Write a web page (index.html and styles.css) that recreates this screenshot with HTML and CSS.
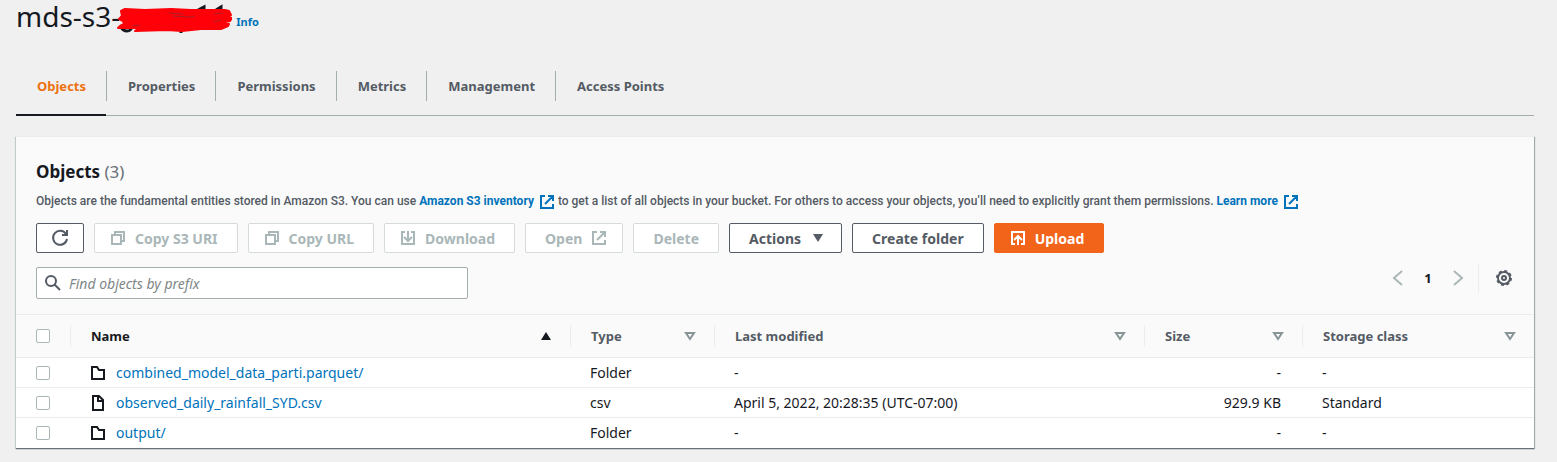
FILE: index.html
```
<!DOCTYPE html>
<html lang="en">
<head>
<meta charset="utf-8">
<title>mds-s3 - S3 bucket</title>
<link rel="stylesheet" href="styles.css">
</head>
<body>
<svg class="defs" aria-hidden="true">
  <symbol id="external" viewBox="0 0 16 16"><path d="M6 2H2v12h12v-4M9 2h5v5M6 10l8-8"/></symbol>
  <symbol id="copy" viewBox="0 0 16 16"><path d="M2 5h9v9H2zM5 5V2h9v9h-3"/></symbol>
  <symbol id="download" viewBox="0 0 16 16"><path d="M5 2H2v12h12V2h-3M8 1v9M4 7l4 4 4-4"/></symbol>
  <symbol id="upload" viewBox="0 0 16 16"><path d="M5 14H2V2h12v12h-3M8 15V7M4 10l4-4 4 4"/></symbol>
  <symbol id="folder" viewBox="0 0 16 16"><path d="M2 2h5l2 3h5v9H2z"/></symbol>
  <symbol id="file" viewBox="0 0 16 16"><path d="M3 1h6l4 4v10H3zM8 1v5h5"/></symbol>
  <symbol id="sort" viewBox="0 0 16 16"><path d="M4 5h8l-4 6z"/></symbol>
</svg>

<header class="page-header">
  <h1 class="bucket-name">mds-s3-<svg class="scribble" viewBox="0 0 116 36" role="img" aria-label="Redacted name">
    <path class="ink" d="M6 16v4M5 27q2 4 6 4t5-4M65 31v2M82 10l6-3v3M100 10l5-3v3"/>
    <path class="marker" d="M5 11L9 9l20 1 26-1 20 1 34 0 4 1 2 4-4 2 5 1-2 3-9 2 8 1-1 2-7 3-20 0-19 2-15-1-32 1 4-3-21 0 2-2 4-2-1-3-4-2 3-3z"/>
    <path class="gap" d="M53 13l14 1M57 16l17 1 5-1M98 14l9-1M97 22l8-2M16 26l8-1"/>
  </svg></h1>
  <a class="info" href="#">Info</a>
</header>

<nav class="tabs">
  <a class="tab tab-active" href="#">Objects</a>
  <a class="tab" href="#">Properties</a>
  <a class="tab" href="#">Permissions</a>
  <a class="tab" href="#">Metrics</a>
  <a class="tab" href="#">Management</a>
  <a class="tab" href="#">Access Points</a>
</nav>

<main class="panel">
  <div class="panel-head">
    <h2 class="heading">Objects <span class="count">(3)</span></h2>
    <p class="description">Objects are the fundamental entities stored in Amazon S3. You can use <a href="#">Amazon S3 inventory <svg class="icon"><use href="#external"/></svg></a> to get a list of all objects in your bucket. For others to access your objects, you’ll need to explicitly grant them permissions. <a href="#">Learn more <svg class="icon"><use href="#external"/></svg></a></p>
    <div class="actions">
      <button class="btn btn-refresh" aria-label="Refresh"><svg class="icon icon-refresh" viewBox="0 0 18 18"><path d="M15 5A7 7 0 1 0 16 10M16 1v5h-5"/></svg></button>
      <button class="btn icon-start" disabled><svg class="icon"><use href="#copy"/></svg>Copy S3 URI</button>
      <button class="btn icon-start" disabled><svg class="icon"><use href="#copy"/></svg>Copy URL</button>
      <button class="btn icon-start" disabled><svg class="icon"><use href="#download"/></svg>Download</button>
      <button class="btn icon-end" disabled>Open<svg class="icon"><use href="#external"/></svg></button>
      <button class="btn" disabled>Delete</button>
      <button class="btn icon-end">Actions<svg class="icon solid" viewBox="0 0 16 16"><path d="M3 4h10L8 12z"/></svg></button>
      <button class="btn">Create folder</button>
      <button class="btn icon-start btn-primary"><svg class="icon"><use href="#upload"/></svg>Upload</button>
    </div>
    <div class="filter-row">
      <label class="search">
        <svg class="icon" viewBox="0 0 16 16"><circle cx="6" cy="6" r="5"/><path d="M9 9l6 6"/></svg>
        <input type="text" placeholder="Find objects by prefix" aria-label="Find objects by prefix">
      </label>
      <div class="pager">
        <button class="plain" aria-label="Previous page" disabled><svg class="icon" viewBox="0 0 16 16"><path d="M12 1L4 8l8 7"/></svg></button>
        <span class="page-number">1</span>
        <button class="plain" aria-label="Next page" disabled><svg class="icon" viewBox="0 0 16 16"><path d="M4 1l8 7-8 7"/></svg></button>
        <button class="plain settings" aria-label="Preferences"><svg class="icon" viewBox="0 0 16 16"><circle cx="8" cy="8" r="6"/><circle class="teeth" cx="8" cy="8" r="7"/><circle cx="8" cy="8" r="2"/></svg></button>
      </div>
    </div>
  </div>
  <table class="objects">
    <colgroup><col class="c-check"><col class="c-name"><col class="c-type"><col class="c-date"><col class="c-size"><col></colgroup>
    <thead>
      <tr>
        <th class="check"><input type="checkbox" aria-label="Select all"></th>
        <th class="sorted"><span class="th">Name <svg class="icon solid" viewBox="0 0 16 16"><path d="M3 12h10L8 4z"/></svg></span></th>
        <th><span class="th">Type <svg class="icon"><use href="#sort"/></svg></span></th>
        <th><span class="th">Last modified <svg class="icon"><use href="#sort"/></svg></span></th>
        <th><span class="th">Size <svg class="icon"><use href="#sort"/></svg></span></th>
        <th><span class="th">Storage class <svg class="icon"><use href="#sort"/></svg></span></th>
      </tr>
    </thead>
    <tbody>
      <tr><td><input type="checkbox" aria-label="Select combined_model_data_parti.parquet/"></td><td><span class="object"><svg class="icon"><use href="#folder"/></svg><a href="#">combined_model_data_parti.parquet/</a></span></td><td>Folder</td><td>-</td><td class="num">-</td><td>-</td></tr>
      <tr><td><input type="checkbox" aria-label="Select observed_daily_rainfall_SYD.csv"></td><td><span class="object"><svg class="icon"><use href="#file"/></svg><a href="#">observed_daily_rainfall_SYD.csv</a></span></td><td>csv</td><td>April 5, 2022, 20:28:35 (UTC-07:00)</td><td class="num">929.9 KB</td><td>Standard</td></tr>
      <tr><td><input type="checkbox" aria-label="Select output/"></td><td><span class="object"><svg class="icon"><use href="#folder"/></svg><a href="#">output/</a></span></td><td>Folder</td><td>-</td><td class="num">-</td><td>-</td></tr>
    </tbody>
  </table>
</main>
</body>
</html>
```
FILE: styles.css
```
* { box-sizing: border-box; }
body {
  margin: 0;
  padding: 0 23px 14px 16px;
  background: #f0f0f0;
  color: #16191f;
  font: 13px/20px "Noto Sans", "Open Sans", sans-serif;
}
a { color: #0073bb; text-decoration: none; }
.defs { position: absolute; width: 0; height: 0; }
.icon { width: 16px; height: 16px; flex: none; fill: none; stroke: currentColor; stroke-width: 2; }
.solid { fill: currentColor; stroke: none; }

.page-header { display: flex; align-items: center; gap: 4px; height: 56px; padding-bottom: 20px; }
.bucket-name { display: flex; align-items: flex-start; height: 36px; margin: 0; font-size: 28px; line-height: 32px; font-weight: 400; }
.scribble { width: 116px; height: 36px; margin-left: -4px; fill: none; }
.ink { stroke: #16191f; stroke-width: 3; }
.marker { fill: #ff0008; stroke: #ff0008; stroke-width: 2; stroke-linejoin: round; }
.gap { stroke: #a8202a; stroke-width: 1; }
.info { font-size: 11px; font-weight: 700; padding-top: 8px; }

.tabs { display: flex; height: 60px; padding-top: 15px; border-bottom: 1px solid #a3adae; }
.tab { position: relative; height: 30px; padding: 0 20px 0 21px; line-height: 30px; font-weight: 700; color: #545b64; border-right: 1px solid #a3adae; }
.tab:last-child { border-right: 0; }
.tab-active { color: #ec7211; }
.tab-active::after { content: ""; position: absolute; left: 0; right: 0; bottom: -15px; height: 2px; background: #16191f; }

.panel { margin-top: 20px; background: #fff; border-top: 1px solid #eaeded; box-shadow: 0 1px 1px #687078, 1px 1px 1px #aab7b8, -1px 1px 1px #d5dbdb; }
.panel-head { padding: 21px 20px 15px; background: #fafafa; }
.heading { margin: 0; font-size: 17px; line-height: 28px; }
.count { font-weight: 400; color: #687078; }
.description { margin: 6px 0 13px; font: 500 12px/18px Roboto, "Noto Sans", sans-serif; color: #545b64; }
.description a { font-weight: 700; }
.description .icon { margin-left: 2px; vertical-align: middle; }
.actions { display: flex; flex-wrap: wrap; gap: 10px; }
.btn { display: flex; align-items: center; justify-content: center; gap: 9px; height: 30px; padding: 0 19px; font: 700 14px "Noto Sans", sans-serif; color: #545b64; background: #fff; border: 1px solid #545b64; border-radius: 2px; }
.btn:disabled { color: #aab7b8; border-color: #d5dbdb; }
.icon-start { padding-left: 15px; }
.icon-end { padding-right: 15px; }
.btn-refresh { padding: 0 14px; }
.icon-refresh { width: 18px; height: 18px; }
.btn-primary { color: #fff; background: #f26419; border-color: #f26419; }
.filter-row { display: flex; justify-content: space-between; align-items: flex-start; margin-top: 14px; }
.search { display: flex; align-items: center; gap: 8px; width: 432px; height: 32px; padding: 0 8px; color: #545b64; background: #fff; border: 1px solid #a3adae; border-radius: 2px; }
.search input { flex: 1; min-width: 0; padding: 0; border: 0; outline: 0; background: none; font: 14px "Noto Sans", sans-serif; }
.search input::placeholder { font-style: italic; color: #808687; opacity: 1; }
.pager { display: flex; align-items: center; height: 30px; margin: -4px 2px 0 0; }
.plain { display: flex; align-items: center; justify-content: center; width: 32px; height: 30px; padding: 0; border: 0; background: none; color: #545b64; }
.plain:disabled { color: #aab7b8; }
.page-number { width: 28px; text-align: center; font-weight: 700; }
.settings { justify-content: flex-end; width: 34px; margin-left: 4px; border-left: 1px solid #eaeded; }
.teeth { stroke-dasharray: 3 2.498; }

.objects { width: 100%; border-collapse: collapse; table-layout: fixed; }
.c-check { width: 54px; }
.c-name { width: 500px; }
.c-type { width: 144px; }
.c-date { width: 430px; }
.c-size { width: 158px; }
th, td { height: 30px; padding: 0 21px 0 20px; text-align: left; border-top: 1px solid #eaeded; }
td { font-size: 14px; }
th { height: 43px; padding: 0 16px 0 0; background: #fafafa; color: #545b64; }
.check { padding-left: 20px; }
.th { display: flex; justify-content: space-between; align-items: center; height: 22px; padding-left: 20px; border-left: 1px solid #eaeded; }
th .icon { color: #879596; }
.sorted, .sorted .icon { color: #16191f; }
.num { text-align: right; }
.object { display: flex; align-items: center; gap: 10px; }
input[type="checkbox"] { display: block; appearance: none; width: 14px; height: 14px; margin: 0; background: #fff; border: 1px solid #aab7b8; border-radius: 2px; }
input[type="checkbox"]:checked { background: #0073bb; }
```
